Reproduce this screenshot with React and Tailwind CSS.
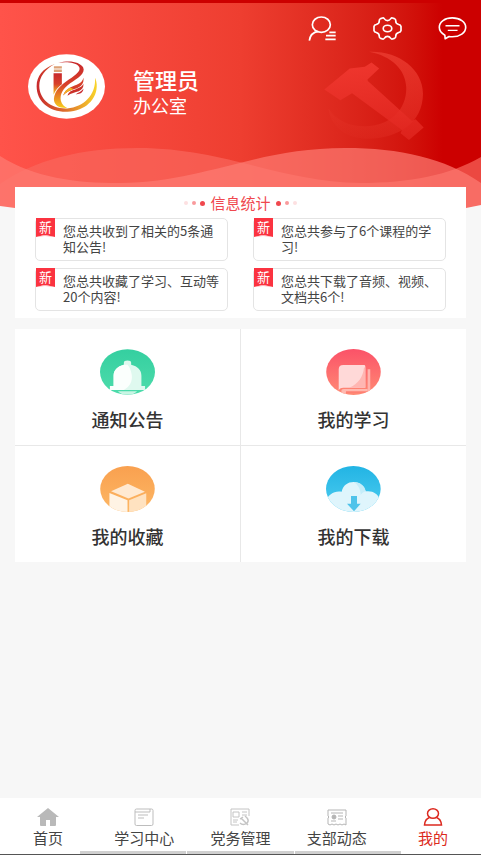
const notices = [
  "您总共收到了相关的5条通知公告!",
  "您总共参与了6个课程的学习!",
  "您总共收藏了学习、互动等20个内容!",
  "您总共下载了音频、视频、文档共6个!",
];

const ContactsIcon = () => (
  <svg viewBox="198 42 87 81" className="h-[27px] w-[29px]" fill="none" stroke="#fff" strokeWidth="5">
    <ellipse cx="238" cy="71" rx="27" ry="23" />
    <path d="M202 119C204 102 214 93 229 91" />
    <path d="M262 94H281M252 104H281M250 115H281" />
  </svg>
);

const SettingsIcon = () => (
  <svg viewBox="392 48 88 74" className="h-[25px] w-[29px]" fill="none" stroke="#fff" strokeWidth="5" strokeLinejoin="round">
    <path d="M411 61Q411 57 415 55L421 53Q424 52 426 55Q430 61 436 61Q442 61 446 55Q448 52 451 53L457 55Q461 57 461 61Q460 70 470 73Q476 74 477 79V91Q476 96 470 97Q460 100 461 109Q461 113 457 115L451 117Q448 118 446 115Q442 109 436 109Q430 109 426 115Q424 118 421 117L415 115Q411 113 411 109Q412 100 402 97Q396 96 395 91V79Q396 74 402 73Q412 70 411 61Z" />
    <ellipse cx="436" cy="85" rx="13" ry="10" />
  </svg>
);

const MessageIcon = () => (
  <svg viewBox="590 46 89 75" className="h-[25px] w-[29px]" fill="none" stroke="#fff" strokeWidth="5" strokeLinejoin="round">
    <path d="M611 104C600 98 594 90 594 80C594 63 611 51 634 51S675 63 675 80S657 109 634 109C630 109 627 109 624 108L612 115Z" />
    <path d="M613 75H656M620 89H650" strokeWidth="4" />
  </svg>
);

const Logo = () => (
  <svg viewBox="84 162 232 194" className="h-[65px] w-[77px] shrink-0">
    <defs>
      <linearGradient id="logoFlame" x1="0" y1="0" x2="0" y2="1">
        <stop offset="0" stopColor="#c8292c" />
        <stop offset=".5" stopColor="#d8402a" />
        <stop offset="1" stopColor="#f8cf1c" />
      </linearGradient>
      <linearGradient id="logoRing" x1="0" y1="0" x2="1" y2="0">
        <stop offset="0" stopColor="#c8292c" />
        <stop offset=".45" stopColor="#dc6a2c" />
        <stop offset="1" stopColor="#f9d52a" />
      </linearGradient>
    </defs>
    <ellipse cx="200" cy="259" rx="116" ry="97" fill="#fff" />
    <path d="M165 191C128 204 110 228 110 258C110 305 150 337 203 335C256 333 294 297 291 252C290 243 288 237 286 233C289 285 252 322 202 325C154 327 118 298 118 257C118 231 134 207 165 191Z" fill="url(#logoRing)" />
    <path d="M162 198H186V205H162ZM162 208H186V215H162Z" fill="#dda176" />
    <path d="M161 219H186V252C175 260 165 272 161 284Z" fill="url(#logoFlame)" />
    <path d="M175 188C210 178 240 185 250 201C259 219 233 235 211 249C190 264 179 282 183 302C186 313 193 319 202 324C177 325 162 315 162 297C164 270 185 254 207 238C231 222 247 209 236 197C226 187 200 184 175 188Z" fill="url(#logoFlame)" />
    <path d="M251 233C247 251 230 254 211 262C201 267 193 276 190 286C202 272 218 268 232 264C245 258 253 250 251 233Z" fill="#d63f2a" />
    <path d="M251 251C245 264 229 266 216 272C209 275 205 280 203 287C214 278 226 277 237 273C247 269 252 262 251 251Z" fill="#ca3029" />
    <path d="M251 266C245 275 236 277 228 282C237 283 250 280 251 266Z" fill="#c8292c" />
    <path d="M190 286C193 276 201 267 211 262L222 267C208 271 198 276 190 286Z" fill="#f3b321" />
  </svg>
);

const Emblem = () => (
  <svg viewBox="250 150 305 275" className="absolute top-[47px] right-[56px] h-[92px] w-[102px]" aria-hidden="true">
    <defs>
      <linearGradient id="sickle" x1="1" y1="0" x2=".3" y2="1">
        <stop offset="0" stopColor="#ff5a4c" stopOpacity=".5" />
        <stop offset=".6" stopColor="#ff5a4c" stopOpacity=".25" />
        <stop offset="1" stopColor="#ff5a4c" stopOpacity=".04" />
      </linearGradient>
      <linearGradient id="hammer" x1="0" y1="0" x2="0" y2="1">
        <stop offset="0" stopColor="#f43b33" />
        <stop offset="1" stopColor="#e0261f" />
      </linearGradient>
    </defs>
    <path d="M388 155C475 152 548 205 549 280C549 370 470 418 375 415C315 413 272 375 266 325C290 362 330 378 375 378C450 377 500 330 499 262C497 208 455 168 388 155Z" fill="url(#sickle)" />
    <path d="M254 268L330 205L375 200L395 187L418 205L383 238L384 243L516 362L527 357L551 382L507 419L482 399L486 389L337 279L302 300Z" fill="url(#hammer)" opacity=".8" />
  </svg>
);

const Waves = () => (
  <svg viewBox="0 3 481 205" preserveAspectRatio="none" className="absolute inset-0 h-full w-full" aria-hidden="true">
    <path d="M0 184C35 160 80 148 138 148C225 148 280 182 360 183C410 183 450 175 481 157V208H0Z" fill="#fa675c" opacity=".7" />
    <path d="M0 156C35 178 75 183 120 183C205 182 255 148 345 148C400 148 445 158 481 183V208H0Z" fill="#fd7c74" opacity=".7" />
    <path d="M0 206L15 208H0ZM481 205L466 208H481Z" fill="#f7f7f7" />
  </svg>
);

const BellIcon = () => (
  <svg viewBox="62 42 166 138" className="h-[46px] w-[55px]">
    <defs>
      <linearGradient id="green" x1="0" y1="0" x2="0" y2="1">
        <stop offset="0" stopColor="#35cfa0" />
        <stop offset="1" stopColor="#4ddcab" />
      </linearGradient>
      <clipPath id="bellClip"><ellipse cx="145" cy="111" rx="83" ry="69" /></clipPath>
    </defs>
    <ellipse cx="145" cy="111" rx="83" ry="69" fill="url(#green)" />
    <g clipPath="url(#bellClip)">
      <path d="M134 89V83Q134 76 145 76Q156 76 156 83V89C176 94 187 105 187 122V153H198V165H92V153H103V122C103 105 115 94 134 89Z" fill="#dff9ef" />
      <path d="M134 89C115 94 103 105 103 122V153H92V165H134C153 155 160 139 158 121C156 108 153 97 145 89Z" fill="#fbfffd" />
      <path d="M116 169H174Q164 180 145 180Q126 180 116 169Z" fill="#c9f5e4" />
    </g>
  </svg>
);

const BookIcon = () => (
  <svg viewBox="78 42 166 140" className="h-[46px] w-[55px]">
    <defs>
      <linearGradient id="pink" x1="0" y1="0" x2="0" y2="1">
        <stop offset="0" stopColor="#fb5268" />
        <stop offset="1" stopColor="#ff8a74" />
      </linearGradient>
      <clipPath id="bookClip"><ellipse cx="161" cy="112" rx="83" ry="70" /></clipPath>
    </defs>
    <ellipse cx="161" cy="112" rx="83" ry="70" fill="url(#pink)" />
    <g clipPath="url(#bookClip)">
      <path d="M116 170V104Q116 91 130 91H193Q197 91 197 95V160H130Q118 160 116 170Z" fill="#ffd9d8" />
      <path d="M197 98V160H148C176 147 190 127 193 98Z" fill="#ffb6b2" />
      <path d="M204 104H212V180H204Z" fill="#ffb3ad" />
      <path d="M126 176Q120 164 132 164H204V171H138V182H126Z" fill="#ffb9b0" />
      <path d="M138 171H204V175H138Z" fill="#ff7d72" />
    </g>
  </svg>
);

const BoxIcon = () => (
  <svg viewBox="62 78 166 140" className="h-[46px] w-[55px]">
    <defs>
      <linearGradient id="orange" x1="0" y1="0" x2="0" y2="1">
        <stop offset="0" stopColor="#f9a04f" />
        <stop offset="1" stopColor="#fdb765" />
      </linearGradient>
      <clipPath id="boxClip"><ellipse cx="145" cy="148" rx="83" ry="70" /></clipPath>
    </defs>
    <ellipse cx="145" cy="148" rx="83" ry="70" fill="url(#orange)" />
    <g clipPath="url(#boxClip)">
      <path d="M146 132L198 156L148 177L95 155Z" fill="#ffe9d1" />
      <path d="M90 160L145 182V220H90Z" fill="#fff3e4" />
      <path d="M150 182L202 161V220H150Z" fill="#ffe2c0" />
    </g>
  </svg>
);

const CloudIcon = () => (
  <svg viewBox="79 78 165 138" className="h-[46px] w-[55px]">
    <defs>
      <linearGradient id="blue" x1="0" y1="0" x2="0" y2="1">
        <stop offset="0" stopColor="#22b4e4" />
        <stop offset="1" stopColor="#4fcdf0" />
      </linearGradient>
      <clipPath id="cloudClip"><ellipse cx="161" cy="147" rx="82" ry="69" /></clipPath>
    </defs>
    <ellipse cx="161" cy="147" rx="82" ry="69" fill="url(#blue)" />
    <g clipPath="url(#cloudClip)">
      <path d="M80 216V182C85 164 104 151 126 155C130 136 144 126 162 126C181 126 195 138 198 154C218 151 234 160 241 178V216Z" fill="#dff5fc" />
      <path d="M162 126C181 126 195 138 198 154C191 156 185 161 183 165C183 148 175 134 162 126Z" fill="#c6edf9" />
      <path d="M154 168H172V191H183L163 214L142 191H154Z" fill="#4fc3ea" />
    </g>
  </svg>
);

const HomeIcon = () => (
  <svg viewBox="0 0 22 18" className="h-[18px] w-[22px]" fill="#b9b9b9">
    <path d="M11 0L22 9H19V17Q19 18 18 18H13V12H9V18H4Q3 18 3 17V9H0Z" />
  </svg>
);

const StudyIcon = () => (
  <svg viewBox="0 0 20 18" className="h-[18px] w-5" fill="none" stroke="#bdbdbd">
    <rect x="1" y="1" width="18" height="16.500" rx="1.500" />
    <path d="M1 4H16V1M4 7H14M4 10H10" />
  </svg>
);

const PartyIcon = () => (
  <svg viewBox="0 0 20 18" className="h-[18px] w-5" fill="none" stroke="#c4c4c4">
    <path d="M19 8V1H1V17H9M3 4H9V9H3ZM12 4H17M12 7H17M3 12H8M3 14H7" />
    <path d="M10 11L13 9M11 10L18 17M15 8Q20 12 17 15Q13 18 10 15" strokeWidth="1.500" />
  </svg>
);

const BranchIcon = () => (
  <svg viewBox="0 0 20 18" className="h-[18px] w-5" fill="none" stroke="#b5b5b5">
    <path d="M1 2H19V8Q17 9 19 10V17L17 16L15 17L13 16L11 17L9 16L7 17L5 16L3 17L1 16V10Q3 9 1 8Z" />
    <circle cx="7" cy="9" r="2" fill="#b5b5b5" />
    <path d="M4 5H16M11 8H16M11 11H16M4 13H9" />
  </svg>
);

const MineIcon = () => (
  <svg viewBox="0 0 20 18" className="h-[18px] w-5" fill="none" stroke="#dc2a20" strokeWidth="1.500">
    <ellipse cx="10" cy="5.500" rx="5.500" ry="4.700" />
    <path d="M6.500 9.500Q2 11 1.500 17H18.500Q18 11 13.500 9.500" />
  </svg>
);

const menu = [
  { label: "通知公告", Icon: BellIcon },
  { label: "我的学习", Icon: BookIcon },
  { label: "我的收藏", Icon: BoxIcon },
  { label: "我的下载", Icon: CloudIcon },
];

const tabs = [
  { label: "首页", Icon: HomeIcon },
  { label: "学习中心", Icon: StudyIcon },
  { label: "党务管理", Icon: PartyIcon },
  { label: "支部动态", Icon: BranchIcon },
  { label: "我的", Icon: MineIcon, active: true },
];

const Notice = ({ text }) => (
  <li className="relative rounded-[5px] border border-[#e4e4e4] pt-1 pr-1 pb-[5px] pl-[27px] text-[13px] leading-4 text-[#444]">
    <svg viewBox="0 0 19 20" className="absolute -top-px left-0 h-5 w-[19px]" aria-hidden="true">
      <path d="M0 0H19V19L9 17L0 19Z" fill="#fb3340" />
      <path d="M0 19L9 17L19 19L9 18Z" fill="#fdb0b4" />
    </svg>
    <span className="absolute top-0 left-[3px] text-[13px] leading-4 text-white">新</span>
    {text}
  </li>
);

const App = () => {
  return (
    <div className="flex min-h-screen flex-col bg-[#f7f7f7] font-['Noto_Sans_CJK_SC',sans-serif]">
      <header className="relative border-t-[3px] border-[#cc0000] bg-linear-to-r from-[#ff534a] via-[#ee3e30] to-[#cc0000] to-92% pb-[89px]">
        <Waves />
        <Emblem />
        <div className="relative flex items-center justify-end gap-9 pt-3 pr-4">
          <button type="button" aria-label="联系人"><ContactsIcon /></button>
          <button type="button" aria-label="设置"><SettingsIcon /></button>
          <button type="button" aria-label="消息" className="-mr-[2px]"><MessageIcon /></button>
        </div>
        <div className="relative flex items-center gap-7 pt-3 pl-7">
          <Logo />
          <div className="pt-2 text-white">
            <h1 className="text-[22px] leading-7 font-medium">管理员</h1>
            <p className="text-lg leading-6">办公室</p>
          </div>
        </div>
      </header>

      <main className="relative -mt-[21px] flex-1 px-[15px]">
        <section className="bg-white px-5 pb-[7px]">
          <div className="flex items-center justify-center gap-1 pt-[5px] pb-1">
            <i className="size-1 rounded-full bg-[#fde0e1]" />
            <i className="size-1 rounded-full bg-[#f99a9c]" />
            <i className="size-[5px] rounded-full bg-[#f0484e]" />
            <h2 className="px-px text-[15px] leading-[22px] text-[#f0484e]">信息统计</h2>
            <i className="size-[5px] rounded-full bg-[#f0484e]" />
            <i className="size-1 rounded-full bg-[#f99a9c]" />
            <i className="size-1 rounded-full bg-[#fde0e1]" />
          </div>
          <ul className="grid grid-cols-2 gap-x-[25px] gap-y-[7px]">
            {notices.map((text) => (
              <Notice key={text} text={text} />
            ))}
          </ul>
        </section>

        <section className="mt-[11px] grid grid-cols-2 gap-px bg-[#e8e8e8]">
          {menu.map(({ label, Icon }) => (
            <button key={label} type="button" className="flex flex-col items-center bg-white pt-5 pb-[14px]">
              <Icon />
              <span className="mt-3 text-lg leading-6 font-medium text-[#333]">{label}</span>
            </button>
          ))}
        </section>
      </main>

      <nav className="border-b border-[#555] bg-white">
        <div className="grid grid-cols-5 pt-[10px]">
          {tabs.map(({ label, Icon, active }) => (
            <a
              key={label}
              href="#"
              className={`flex flex-col items-center text-[15px] leading-5 ${active ? "text-[#dc2a20]" : "text-[#444]"}`}
            >
              <Icon />
              <span className="mt-[2px]">{label}</span>
            </a>
          ))}
        </div>
        <div className="mx-auto mt-[3px] grid h-[3px] w-2/3 grid-cols-3 gap-px">
          <i className="bg-[#d0d0d0]" />
          <i className="bg-[#d0d0d0]" />
          <i className="bg-[#d0d0d0]" />
        </div>
      </nav>
    </div>
  );
};

export default App;
